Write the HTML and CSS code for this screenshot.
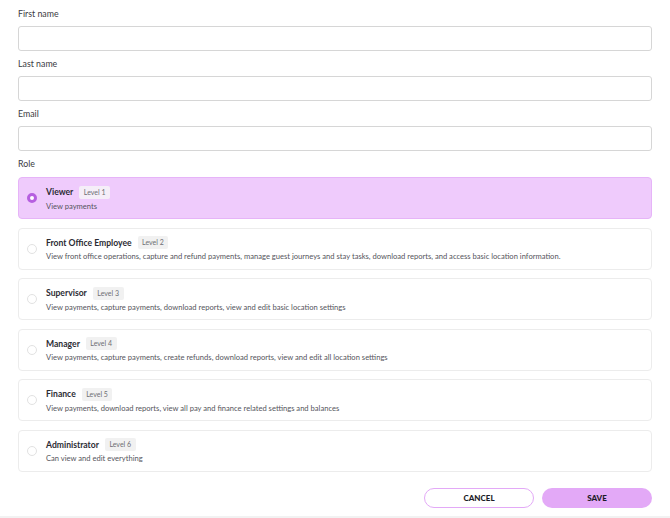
FILE: index.html
```html
<!DOCTYPE html>
<html lang="en">
<head>
    <meta charset="UTF-8">
    <meta name="viewport" content="width=device-width, initial-scale=1.0">
    <title>Edit User</title>
    <link rel="stylesheet" href="styles.css">
</head>
<body>
    <form class="user-form">
        <div class="field">
            <label for="firstName">First name</label>
            <input type="text" id="firstName">
        </div>
        <div class="field">
            <label for="lastName">Last name</label>
            <input type="text" id="lastName">
        </div>
        <div class="field">
            <label for="email">Email</label>
            <input type="email" id="email">
        </div>

        <div class="role-label">Role</div>
        <div class="roles">
            <label class="role selected">
                <span class="radio"></span>
                <span class="role-body">
                    <span class="role-head"><span class="role-name">Viewer</span><span class="badge">Level 1</span></span>
                    <span class="role-desc">View payments</span>
                </span>
            </label>
            <label class="role">
                <span class="radio"></span>
                <span class="role-body">
                    <span class="role-head"><span class="role-name">Front Office Employee</span><span class="badge">Level 2</span></span>
                    <span class="role-desc">View front office operations, capture and refund payments, manage guest journeys and stay tasks, download reports, and access basic location information.</span>
                </span>
            </label>
            <label class="role">
                <span class="radio"></span>
                <span class="role-body">
                    <span class="role-head"><span class="role-name">Supervisor</span><span class="badge">Level 3</span></span>
                    <span class="role-desc">View payments, capture payments, download reports, view and edit basic location settings</span>
                </span>
            </label>
            <label class="role">
                <span class="radio"></span>
                <span class="role-body">
                    <span class="role-head"><span class="role-name">Manager</span><span class="badge">Level 4</span></span>
                    <span class="role-desc">View payments, capture payments, create refunds, download reports, view and edit all location settings</span>
                </span>
            </label>
            <label class="role">
                <span class="radio"></span>
                <span class="role-body">
                    <span class="role-head"><span class="role-name">Finance</span><span class="badge">Level 5</span></span>
                    <span class="role-desc">View payments, download reports, view all pay and finance related settings and balances</span>
                </span>
            </label>
            <label class="role">
                <span class="radio"></span>
                <span class="role-body">
                    <span class="role-head"><span class="role-name">Administrator</span><span class="badge">Level 6</span></span>
                    <span class="role-desc">Can view and edit everything</span>
                </span>
            </label>
        </div>

        <div class="actions">
            <button type="button" class="btn btn-cancel">CANCEL</button>
            <button type="submit" class="btn btn-save">SAVE</button>
        </div>
    </form>
    <div class="footer-band"></div>
</body>
</html>
```

FILE: styles.css
```css
body {
    font-family: Lato, "Noto Sans", sans-serif;
    background-color: #fff;
    color: #2b2b33;
    margin: 0;
}
.user-form {
    padding: 8px 18px 0 18px;
}
.field {
    margin-bottom: 7px;
}
.field label,
.role-label {
    display: block;
    font-size: 8.8px;
    line-height: 12px;
    color: #3a3a42;
    margin-bottom: 6px;
}
.field input {
    display: block;
    box-sizing: border-box;
    width: 100%;
    height: 25px;
    border: 1px solid #d6d6d6;
    border-radius: 3px;
    background: #fff;
}
.role-label {
    margin-bottom: 7px;
}
.roles {
    display: flex;
    flex-direction: column;
    gap: 8.5px;
}
.role {
    box-sizing: border-box;
    height: 42px;
    display: flex;
    align-items: center;
    padding: 0 0 0 8px;
    border: 1px solid #ececec;
    border-radius: 4px;
    background: #fff;
}
.role.selected {
    background: #efcbfc;
    border-color: #e6b4f8;
}
.radio {
    box-sizing: border-box;
    width: 10px;
    height: 10px;
    border-radius: 50%;
    border: 1px solid #e2e2e2;
    background: #fff;
    margin-right: 9px;
    flex-shrink: 0;
}
.role.selected .radio {
    border: 3px solid #b65fe0;
    background: #fff;
}
.role-body {
    display: flex;
    flex-direction: column;
    gap: 2px;
}
.role-head {
    display: flex;
    align-items: center;
    gap: 6px;
    height: 13px;
}
.role-name {
    font-size: 8.6px;
    font-weight: 700;
    color: #2b2b33;
}
.badge {
    font-size: 7px;
    line-height: 13px;
    padding: 0 4.5px;
    border-radius: 2px;
    background: #f1f1f1;
    color: #6e6e74;
}
.role.selected .badge {
    background: #f5eef8;
}
.role-desc {
    font-size: 7.6px;
    line-height: 10px;
    color: #55555c;
}
.actions {
    display: flex;
    justify-content: flex-end;
    gap: 8px;
    margin-top: 16px;
}
.btn {
    box-sizing: border-box;
    width: 110px;
    height: 20px;
    border-radius: 10px;
    font-family: Lato, sans-serif;
    font-size: 8px;
    font-weight: 900;
    color: #1c1c28;
    cursor: pointer;
}
.btn-cancel {
    background: #fff;
    border: 1.5px solid #e3a9f7;
}
.btn-save {
    background: #e3a9f7;
    border: none;
}
.footer-band {
    margin-top: 8px;
    height: 10px;
    background: #f2f2f2;
}
```
